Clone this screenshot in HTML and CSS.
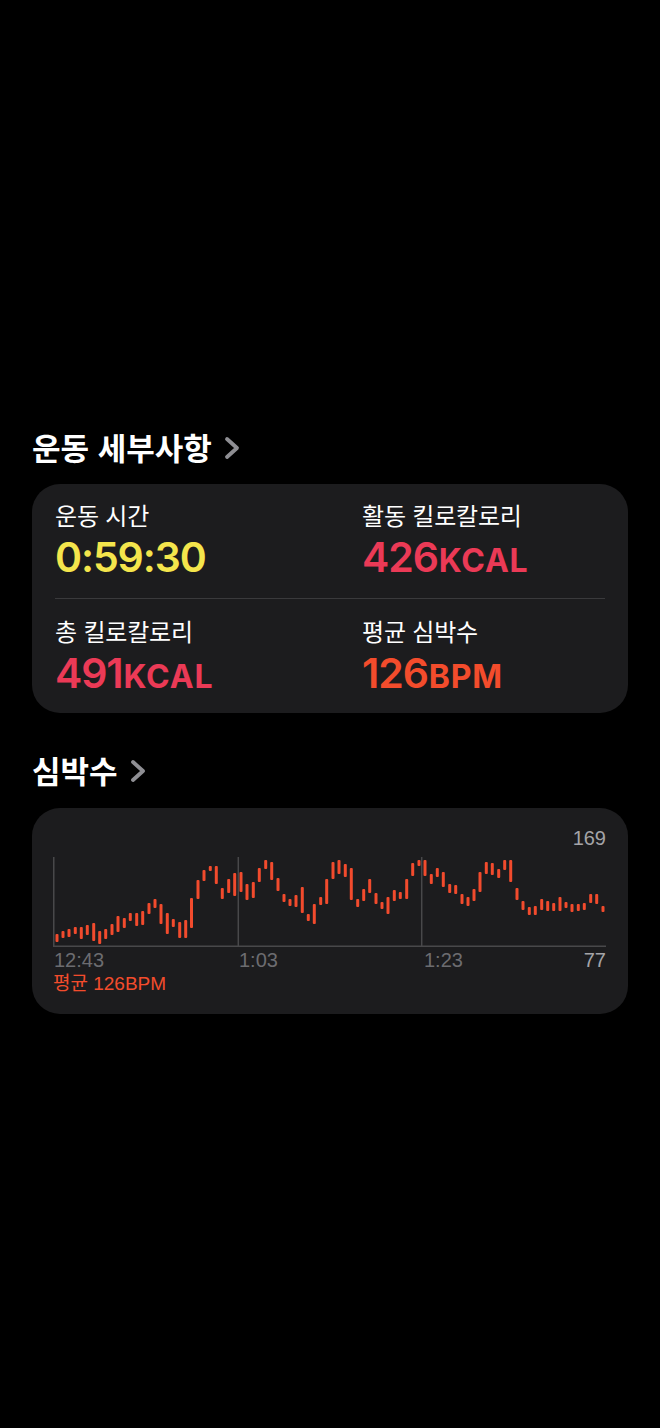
FILE: index.html
```html
<!DOCTYPE html>
<html lang="ko">
<head>
<meta charset="utf-8">
<title>운동 세부사항</title>
<link rel="stylesheet" href="styles.css">
</head>
<body>
<main class="page">
  <h2 class="section-title title-first">운동 세부사항<svg class="chev" viewBox="0 0 18 26" width="18" height="26"><path d="M4 4 L14 13 L4 22"/></svg></h2>
  <section class="card stats">
    <div class="stat-row row-top">
      <div class="stat">
        <div class="stat-label">운동 시간</div>
        <div class="stat-value yellow"><span class="num">0:59:30</span></div>
      </div>
      <div class="stat">
        <div class="stat-label">활동 킬로칼로리</div>
        <div class="stat-value red"><span class="num">426</span><span class="unit">KCAL</span></div>
      </div>
    </div>
    <div class="divider"></div>
    <div class="stat-row row-bottom">
      <div class="stat">
        <div class="stat-label">총 킬로칼로리</div>
        <div class="stat-value red"><span class="num">491</span><span class="unit">KCAL</span></div>
      </div>
      <div class="stat">
        <div class="stat-label">평균 심박수</div>
        <div class="stat-value orange"><span class="num">126</span><span class="unit">BPM</span></div>
      </div>
    </div>
  </section>

  <h2 class="section-title title-second">심박수<svg class="chev" viewBox="0 0 18 26" width="18" height="26"><path d="M4 4 L14 13 L4 22"/></svg></h2>
  <section class="card hr">
    <div class="hr-max">169</div>
    <svg class="chart" viewBox="0 0 553 98" width="553" height="98">
      <g class="grid">
        <line x1="0.75" y1="7" x2="0.75" y2="96"/>
        <line x1="185.3" y1="7" x2="185.3" y2="96"/>
        <line x1="368.7" y1="7" x2="368.7" y2="96"/>
        <line x1="0" y1="96.2" x2="553" y2="96.2"/>
      </g>
      <g class="bars">
        <rect x="2.5" y="84" width="3" height="8" rx="1"/>
        <rect x="8.5" y="81" width="3" height="7" rx="1"/>
        <rect x="14.5" y="79" width="3" height="8" rx="1"/>
        <rect x="20.8" y="77" width="3" height="7" rx="1"/>
        <rect x="26.8" y="77" width="3" height="12" rx="1"/>
        <rect x="32.8" y="75" width="3" height="10" rx="1"/>
        <rect x="39.2" y="73" width="3" height="18" rx="1"/>
        <rect x="45.2" y="81" width="3" height="13" rx="1"/>
        <rect x="51.2" y="79" width="3" height="10" rx="1"/>
        <rect x="57.5" y="74" width="3" height="11" rx="1"/>
        <rect x="63.5" y="66" width="3" height="16" rx="1"/>
        <rect x="69.8" y="68" width="3" height="10" rx="1"/>
        <rect x="75.8" y="63" width="3" height="8" rx="1"/>
        <rect x="82.2" y="63" width="3" height="13" rx="1"/>
        <rect x="88.2" y="61" width="3" height="14" rx="1"/>
        <rect x="94.5" y="53" width="3" height="11" rx="1"/>
        <rect x="100.5" y="49" width="3" height="9" rx="1"/>
        <rect x="106.5" y="54" width="3" height="20" rx="1"/>
        <rect x="112.8" y="63" width="3" height="21" rx="1"/>
        <rect x="118.8" y="69" width="3" height="8" rx="1"/>
        <rect x="125.2" y="72" width="3" height="16" rx="1"/>
        <rect x="131.2" y="70" width="3" height="18" rx="1"/>
        <rect x="137" y="48" width="3" height="30" rx="1"/>
        <rect x="143.5" y="30" width="3" height="19" rx="1"/>
        <rect x="149.5" y="20" width="3" height="11" rx="1"/>
        <rect x="155.8" y="16" width="3" height="5" rx="1"/>
        <rect x="161.8" y="16" width="3" height="18" rx="1"/>
        <rect x="167.8" y="38" width="3" height="11" rx="1"/>
        <rect x="174.2" y="29" width="3" height="14" rx="1"/>
        <rect x="180.2" y="23" width="3" height="23" rx="1"/>
        <rect x="186.5" y="22" width="3" height="20" rx="1"/>
        <rect x="192.5" y="34" width="3" height="16" rx="1"/>
        <rect x="198.8" y="32" width="3" height="16" rx="1"/>
        <rect x="204.8" y="18" width="3" height="14" rx="1"/>
        <rect x="211.2" y="10" width="3" height="9" rx="1"/>
        <rect x="217.2" y="12" width="3" height="18" rx="1"/>
        <rect x="223.5" y="28" width="3" height="13" rx="1"/>
        <rect x="229.5" y="44" width="3" height="8" rx="1"/>
        <rect x="235.5" y="49" width="3" height="7" rx="1"/>
        <rect x="241.5" y="45" width="3" height="12" rx="1"/>
        <rect x="247.8" y="37" width="3" height="26" rx="1"/>
        <rect x="253.8" y="64" width="3" height="7" rx="1"/>
        <rect x="259.8" y="54" width="3" height="20" rx="1"/>
        <rect x="266.2" y="47" width="3" height="8" rx="1"/>
        <rect x="272.2" y="29" width="3" height="25" rx="1"/>
        <rect x="278.5" y="12" width="3" height="17" rx="1"/>
        <rect x="284.5" y="10" width="3" height="14" rx="1"/>
        <rect x="290.8" y="14" width="3" height="13" rx="1"/>
        <rect x="296.8" y="18" width="3" height="32" rx="1"/>
        <rect x="303.2" y="49" width="3" height="8" rx="1"/>
        <rect x="309.2" y="39" width="3" height="12" rx="1"/>
        <rect x="315.2" y="29" width="3" height="14" rx="1"/>
        <rect x="321.5" y="43" width="3" height="11" rx="1"/>
        <rect x="327.5" y="52" width="3" height="7" rx="1"/>
        <rect x="333.5" y="47" width="3" height="17" rx="1"/>
        <rect x="339.8" y="40" width="3" height="11" rx="1"/>
        <rect x="345.8" y="42" width="3" height="7" rx="1"/>
        <rect x="352.2" y="29" width="3" height="20" rx="1"/>
        <rect x="358.2" y="13" width="3" height="13" rx="1"/>
        <rect x="364.5" y="10" width="3" height="6" rx="1"/>
        <rect x="370.5" y="10" width="3" height="16" rx="1"/>
        <rect x="376.8" y="24" width="3" height="10" rx="1"/>
        <rect x="382.8" y="18" width="3" height="9" rx="1"/>
        <rect x="388.8" y="22" width="3" height="15" rx="1"/>
        <rect x="395.2" y="34" width="3" height="9" rx="1"/>
        <rect x="401.2" y="35" width="3" height="9" rx="1"/>
        <rect x="407.5" y="44" width="3" height="10" rx="1"/>
        <rect x="413.5" y="47" width="3" height="9" rx="1"/>
        <rect x="419.5" y="39" width="3" height="12" rx="1"/>
        <rect x="425.5" y="22" width="3" height="20" rx="1"/>
        <rect x="431.8" y="12" width="3" height="12" rx="1"/>
        <rect x="437.8" y="13" width="3" height="12" rx="1"/>
        <rect x="444.2" y="19" width="3" height="9" rx="1"/>
        <rect x="450.2" y="10" width="3" height="10" rx="1"/>
        <rect x="456.2" y="10" width="3" height="22" rx="1"/>
        <rect x="462.5" y="38" width="3" height="12" rx="1"/>
        <rect x="468.5" y="51" width="3" height="9" rx="1"/>
        <rect x="474.8" y="57" width="3" height="8" rx="1"/>
        <rect x="480.8" y="56" width="3" height="9" rx="1"/>
        <rect x="487.2" y="49" width="3" height="11" rx="1"/>
        <rect x="493.2" y="51" width="3" height="10" rx="1"/>
        <rect x="499.2" y="53" width="3" height="8" rx="1"/>
        <rect x="505.5" y="47" width="3" height="14" rx="1"/>
        <rect x="511.5" y="52" width="3" height="6" rx="1"/>
        <rect x="517.5" y="54" width="3" height="8" rx="1"/>
        <rect x="523.8" y="54" width="3" height="7" rx="1"/>
        <rect x="529.8" y="53" width="3" height="7" rx="1"/>
        <rect x="536.2" y="44" width="3" height="9" rx="1"/>
        <rect x="542.2" y="44" width="3" height="10" rx="1"/>
        <rect x="548.5" y="56" width="3" height="6" rx="1"/>
      </g>
    </svg>
    <div class="axis">
      <span class="tick">12:43</span>
      <span class="tick">1:03</span>
      <span class="axis-end"><span class="tick">1:23</span><span class="tick-min">77</span></span>
    </div>
    <div class="hr-avg">평균 126BPM</div>
  </section>
</main>
</body>
</html>
```

FILE: styles.css
```css
html, body {
  margin: 0;
  padding: 0;
  background: #000;
}

body {
  width: 660px;
  min-height: 1428px;
  color: #fff;
  font-family: "Noto Sans CJK KR", "Noto Sans", sans-serif;
}

.page {
  padding: 0 32px;
}

.section-title {
  display: flex;
  align-items: center;
  margin: 0;
  font-size: 31px;
  font-weight: 700;
  line-height: 36px;
  letter-spacing: 0;
  color: #fff;
}

.title-first {
  padding-top: 429px;
  margin-bottom: 19px;
}

.title-second {
  margin-top: 39px;
  margin-bottom: 20px;
}

.chev {
  margin-left: 11px;
  margin-top: 2px;
  fill: none;
  stroke: #8e8e93;
  stroke-width: 3.8;
  stroke-linecap: round;
  stroke-linejoin: round;
}

.card {
  background: #1c1c1e;
  border-radius: 28px;
}

.stats {
  padding: 16px 23px 17px 23px;
}

.stat-row {
  display: grid;
  grid-template-columns: 307px 1fr;
}

.row-top {
  padding-bottom: 18px;
}

.row-bottom {
  padding-top: 17px;
}

.divider {
  height: 1px;
  background: #3a3a3c;
}

.stat-label {
  font-size: 24px;
  line-height: 30px;
  font-weight: 400;
  color: #fff;
  letter-spacing: -0.2px;
}

.stat-value {
  margin-top: 4px;
  height: 46px;
  font-family: Inter, "Noto Sans", sans-serif;
  font-size: 41px;
  line-height: 46px;
  font-weight: 600;
}

.num {
  letter-spacing: -1.1px;
}

.unit {
  font-size: 32px;
  line-height: 1;
  font-weight: 700;
  letter-spacing: 0.8px;
  margin-left: 1px;
}

.yellow { color: #f4e54c; }
.red { color: #eb3a56; }
.orange { color: #f34c2c; }

.hr {
  padding: 19px 22px 19px 21px;
}

.hr-max {
  text-align: right;
  font-family: "Liberation Sans", sans-serif;
  font-size: 20px;
  line-height: 23px;
  color: #a4a4a8;
}

.chart {
  display: block;
}

.grid line {
  stroke: #48484a;
  stroke-width: 1.5;
}

.bars rect {
  fill: #f24b2d;
}

.axis {
  display: grid;
  grid-template-columns: 185px 185px 1fr;
  font-family: "Liberation Sans", sans-serif;
  font-size: 20px;
  line-height: 24px;
  color: #6c6c70;
}

.tick {
  padding-left: 1px;
}

.axis-end {
  display: flex;
  justify-content: space-between;
}

.tick-min {
  color: #a4a4a8;
}

.hr-avg {
  margin-top: 1px;
  font-family: "Liberation Sans", "Noto Sans CJK KR", sans-serif;
  font-size: 19px;
  line-height: 22px;
  color: #f34c2c;
}
```
